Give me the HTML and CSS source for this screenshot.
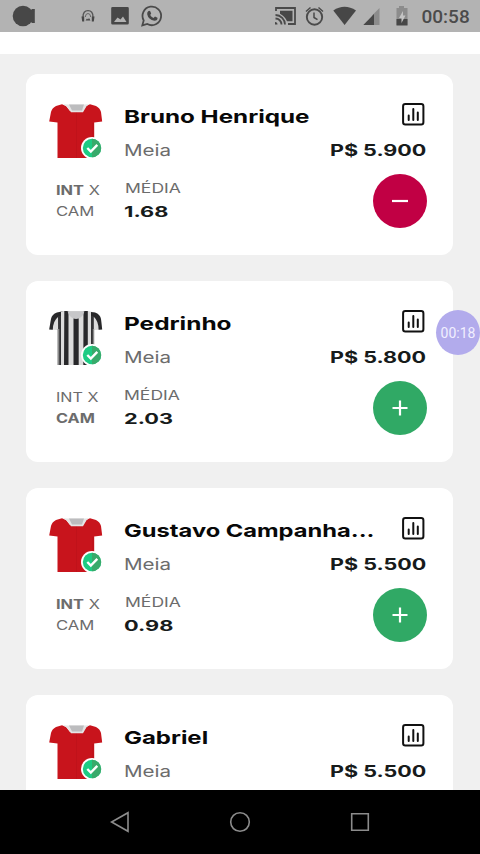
FILE: index.html
```html
<!DOCTYPE html>
<html lang="pt-BR">
<head>
<meta charset="utf-8">
<title>Mercado</title>
<link rel="stylesheet" href="styles.css">
</head>
<body>
<svg class="defs" width="0" height="0">
  <symbol id="red" viewBox="0 0 54 54">
    <path fill="#c8141c" d="M13 .2 7 2Q3 4 2 8L.2 17.500l8.300.9V54h36.700V18.400l8-.9L52 8Q51 4 47 2L41 .200 37 2 34 7H21L17 2Z"/>
    <path fill="#b20e17" d="M27 7v47h1V7ZM43 19h2v14h-2Z" opacity=".35"/>
    <path fill="#e5e5e5" d="m14 .3 4 .2h17l5-.2-2.500 2L34 8.300H22L18 2.800Z"/>
    <path fill="#bcbcbe" d="M20 .5h15l-2 6H23Z"/>
  </symbol>
  <symbol id="stripe" viewBox="0 0 54 54">
    <path fill="#dcdcdc" d="M15 0 8 1.500Q3 3 2 8L.2 18.500l8.300.5V54h36.700V19l8-.5L52 8Q51 3 46 1.500L39 0Z"/>
    <path fill="#28282a" d="M15 0 8 1.500Q3 3 2 8L.2 18.500l3.600.2Q4 10 9 6l3-.5V1ZM15.300 0h4.200V54h-4.500ZM24.500 7h5.200v47h-5.200ZM34.500 0h4.300V54h-4.500ZM42 1 46 1.500Q51 3 52 8l1.200 10.500-3.600.2Q49.500 10 45 6l-3-.5Z"/>
    <path fill="#333335" d="M9 5h3v49H9.300ZM42 5h2.800v49H42Z"/>
    <path fill="#8b8b8b" d="M8.500 18h1.800v36H8.500ZM43.800 18h1.400v36h-1.400Z"/>
    <path fill="#c7c7c9" d="M18.500.3h17Q33 8 27 8T18.500.3Z"/>
  </symbol>
  <symbol id="check" viewBox="0 0 22 22">
    <circle cx="11" cy="11" r="11" fill="#fff"/>
    <circle cx="11" cy="11" r="9.200" fill="#1dcb83"/>
    <path fill="#38aa6b" d="M11 1.800a9.200 9.200 0 0 1 0 18.400Z"/>
    <path fill="none" stroke="#fff" stroke-width="2.400" d="m6.300 11 3.500 3.500 6.500-6.700"/>
  </symbol>
  <symbol id="chart" viewBox="0 0 23 23">
    <rect x="1.100" y="1.100" width="20.300" height="20.300" rx="2.200" fill="none" stroke="#111" stroke-width="2"/>
    <path fill="none" stroke="#111" stroke-width="2" stroke-linecap="round" d="M6.700 12.500v4.500M11.300 6v11M15.800 9.500V17"/>
  </symbol>
</svg>
<div class="screen">
  <header class="status">
    <svg width="480" height="32" viewBox="0 0 480 32" fill="#474747">
      <circle cx="23" cy="16" r="10.300"/><path d="m29 12 3-3h2.800v14H32l-3-3Z"/>
      <path fill="none" stroke="#555" stroke-width="1.300" d="M83 19v-2q0-6.300 5-6.300t5 6.300v2"/><path fill="none" stroke="#666" d="M85.300 17q.2-3.500 2.700-3.500t2.700 3.500"/><path d="M81.500 16.500h2.700v5h-2ZM91.800 16.500h2.700l-.7 5h-2ZM85.500 20.500l1.500-2 1 1 1-1.500 1.500 2.500Z"/>
      <path fill-rule="evenodd" d="M112.500 7h15q1.300 0 1.300 1.300v15q0 1.300-1.300 1.300h-15q-1.300 0-1.300-1.300v-15q0-1.300 1.300-1.300ZM114 22h12.500l-3.500-5.500-2.500 3-3-2Z"/>
      <path fill="none" stroke="#4a4a4a" stroke-width="1.800" d="m142.300 25.400 1.400-5A9.300 9.300 0 1 1 147.300 24Z"/>
      <path d="M148.200 11.200q1-1 2 0l1 2.300-1 1.500q1 2 3.300 3l1.500-1.500 2.500 1.200q.3 3-3 3-6.300-1.200-7.300-6.500-.2-2 1-3Z"/>
      <path fill="none" stroke="#4a4a4a" stroke-width="1.800" d="M276 11V8h19v16h-7M275.500 18.500a6 6 0 0 1 6 6M275.500 15a9.500 9.500 0 0 1 9.500 9.500"/><path d="M275 22q2.500 0 2.500 2.500H275ZM280 10.700h12.500v10.600h-5.500q-2-5-7-7.600Z"/>
      <circle cx="314.500" cy="17" r="7.700" fill="none" stroke="#4a4a4a" stroke-width="1.900"/><path fill="none" stroke="#4a4a4a" stroke-width="1.500" d="M314 12.500v5l3.500 2.200M306 11.500l4.500-4M323 11.500l-4.500-4"/>
      <path d="M333.300 10.500Q344.500 3 356 10.500L344.600 25Z"/>
      <path fill="#8c8c8c" d="M379.500 8v17H372V15.500Z"/><path d="M363.300 25 374 14v11Z"/>
      <path fill="#8c8c8c" d="M399 6h5v2h3.500v17h-11V8h2.500Z"/><path d="M396.500 19h11v6.500h-11Z"/><path fill="#c4c4c4" d="m403 11-4 7h2.500v5l4-7.500H403Z"/>
    </svg>
    <span class="clock">00:58</span>
  </header>
  <div class="toolbar"></div>
  <main class="list">
    <article class="card">
      <div class="kit"><svg class="shirt"><use href="#red"/></svg><svg class="ok"><use href="#check"/></svg></div>
      <div class="who"><h2 class="wide bruno">Bruno Henrique</h2><p class="wide role">Meia</p></div>
      <div class="cost"><svg class="chart"><use href="#chart"/></svg><b class="wide price">P$ 5.900</b></div>
      <div class="match"><span class="wide home"><b>INT</b> X</span><span class="wide away">CAM</span></div>
      <div class="avg"><span class="wide label">MÉDIA</span><b class="wide value">1.68</b></div>
      <button class="act remove"><svg viewBox="0 0 54 54"><path d="M19 27h16"/></svg></button>
    </article>
    <article class="card">
      <div class="kit"><svg class="shirt"><use href="#stripe"/></svg><svg class="ok"><use href="#check"/></svg></div>
      <div class="who"><h2 class="wide pedrinho">Pedrinho</h2><p class="wide role">Meia</p></div>
      <div class="cost"><svg class="chart"><use href="#chart"/></svg><b class="wide price">P$ 5.800</b></div>
      <div class="match"><span class="wide home light">INT X</span><b class="wide away strong">CAM</b></div>
      <div class="avg"><span class="wide label shift">MÉDIA</span><b class="wide value">2.03</b></div>
      <button class="act"><svg viewBox="0 0 54 54"><path d="M19.500 27h15M27 19.500v15"/></svg></button>
    </article>
    <article class="card">
      <div class="kit"><svg class="shirt"><use href="#red"/></svg><svg class="ok"><use href="#check"/></svg></div>
      <div class="who"><h2 class="wide gustavo">Gustavo Campanha...</h2><p class="wide role">Meia</p></div>
      <div class="cost"><svg class="chart"><use href="#chart"/></svg><b class="wide price">P$ 5.500</b></div>
      <div class="match"><span class="wide home"><b>INT</b> X</span><span class="wide away">CAM</span></div>
      <div class="avg"><span class="wide label">MÉDIA</span><b class="wide value">0.98</b></div>
      <button class="act"><svg viewBox="0 0 54 54"><path d="M19.500 27h15M27 19.500v15"/></svg></button>
    </article>
    <article class="card">
      <div class="kit"><svg class="shirt"><use href="#red"/></svg><svg class="ok"><use href="#check"/></svg></div>
      <div class="who"><h2 class="wide gabriel">Gabriel</h2><p class="wide role">Meia</p></div>
      <div class="cost"><svg class="chart"><use href="#chart"/></svg><b class="wide price">P$ 5.500</b></div>
    </article>
  </main>
  <nav class="nav">
    <svg viewBox="0 0 24 24"><path d="M20 2.700v18.600L3.600 12Z"/></svg>
    <svg viewBox="0 0 24 24"><circle cx="12" cy="12" r="9.300"/></svg>
    <svg viewBox="0 0 24 24"><path d="M3.700 3.700h16.600v16.600H3.700Z"/></svg>
  </nav>
  <div class="timer">00:18</div>
</div>
</body>
</html>
```

FILE: styles.css
```css
* { box-sizing: border-box; }
body { margin: 0; }
.defs { display: block; }
.screen {
  position: relative;
  display: flex;
  flex-direction: column;
  width: 480px;
  height: 854px;
  overflow: hidden;
  background: #f0f0f0;
  font-family: Inter, "Liberation Sans", sans-serif;
}
.status { display: flex; flex: none; height: 32px; background: #b3b3b3; }
.status svg { flex: none; }
.clock {
  flex: none;
  width: 60px;
  margin-left: -58.5px;
  font: 500 19px/33px Roboto, sans-serif;
  color: #4b4b4b;
}
.toolbar { flex: none; height: 22px; background: #fff; }
.list {
  display: flex;
  flex: 1;
  flex-direction: column;
  gap: 26px;
  min-height: 0;
  padding: 20px 27px 0 26px;
  overflow: hidden;
}
.card {
  display: grid;
  flex: none;
  grid-template: 71.5px 76px / 75px minmax(0, 1fr) 110px;
  height: 181px;
  padding: 30px 27px 0 23px;
  border-radius: 12px;
  background: #fff;
}
.kit { position: relative; }
.shirt { display: block; width: 54px; height: 54px; }
.ok { position: absolute; left: 32px; top: 33px; width: 22px; height: 22px; }
.wide {
  display: block;
  width: max-content;
  margin: 0;
  white-space: nowrap;
  transform: scaleX(var(--stretch));
  transform-origin: left;
}
h2 { font-size: 18px; line-height: 26px; font-weight: 700; color: #080808; }
.bruno { --stretch: 1.345; }
.pedrinho { --stretch: 1.355; }
.gustavo { --stretch: 1.315; }
.gabriel { --stretch: 1.33; }
.role { --stretch: 1.285; margin-top: 10px; font-size: 16px; line-height: 20px; color: #6c6c6c; }
.cost { display: flex; flex-direction: column; align-items: flex-end; }
.chart { width: 23px; height: 23px; margin: -1px 1px 15px 0; }
.price { --stretch: 1.39; font-size: 15.5px; line-height: 20px; color: #171b1b; transform-origin: right; }
.match { padding: 4px 0 0 7px; font-size: 13px; line-height: 21px; color: #6c6c6c; }
.home { --stretch: 1.26; }
.away { --stretch: 1.28; }
.strong { --stretch: 1.25; }
.light { --stretch: 1.24; }
.avg { padding-top: 1px; line-height: 23.5px; }
.label { --stretch: 1.3; margin-left: 1px; font-size: 13.5px; color: #6c6c6c; }
.shift { margin-left: 0; }
.value { --stretch: 1.5; font-size: 14.5px; color: #171b1b; }
.act {
  justify-self: end;
  width: 54px;
  height: 54px;
  margin: -1.5px -1px 0 0;
  padding: 0;
  border: 0;
  border-radius: 50%;
  background: #30a965;
}
.remove { background: #c10044; }
.act svg { display: block; fill: none; stroke: #fff; stroke-width: 2.2; }
.nav {
  display: flex;
  flex: none;
  justify-content: center;
  align-items: center;
  gap: 96px;
  height: 64px;
  background: #000;
}
.nav svg { width: 24px; height: 24px; fill: none; stroke: #8c8c8c; stroke-width: 1.6; }
.timer {
  position: absolute;
  left: 436px;
  top: 310px;
  width: 44px;
  height: 45px;
  border-radius: 50%;
  background: #b2abec;
  color: #f1efff;
  font: 14px/46px Roboto, sans-serif;
  text-align: center;
}
```
